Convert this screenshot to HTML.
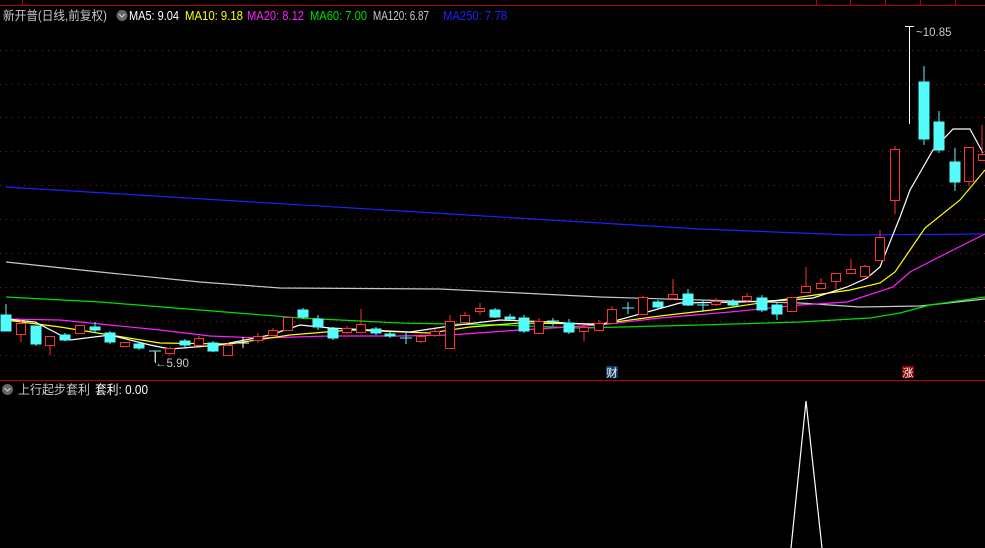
<!DOCTYPE html>
<html><head><meta charset="utf-8"><style>
html,body{margin:0;padding:0;background:#000;width:985px;height:548px;overflow:hidden}
svg{display:block}
text{font-family:"Liberation Sans","Noto Sans CJK SC",sans-serif}
</style></head><body>
<svg width="985" height="548" viewBox="0 0 985 548" xmlns="http://www.w3.org/2000/svg">
<rect width="985" height="548" fill="#000"/>
<line x1="0" y1="5.5" x2="985" y2="5.5" stroke="#b00000"/>
<line x1="22.5" y1="0" x2="22.5" y2="5" stroke="#b00000"/>
<g stroke="#b00000"><line x1="816.5" y1="0" x2="816.5" y2="5"/><line x1="850.5" y1="0" x2="850.5" y2="5"/><line x1="885.5" y1="0" x2="885.5" y2="5"/><line x1="920.5" y1="0" x2="920.5" y2="5"/><line x1="955.5" y1="0" x2="955.5" y2="5"/></g>
<g stroke="#8a1a1a" stroke-dasharray="1,5">
<line x1="0" y1="50.5" x2="985" y2="50.5"/><line x1="0" y1="84.5" x2="985" y2="84.5"/><line x1="0" y1="117.5" x2="985" y2="117.5"/><line x1="0" y1="151.5" x2="985" y2="151.5"/><line x1="0" y1="185.5" x2="985" y2="185.5"/><line x1="0" y1="219.5" x2="985" y2="219.5"/><line x1="0" y1="253.5" x2="985" y2="253.5"/><line x1="0" y1="287.5" x2="985" y2="287.5"/><line x1="0" y1="321.5" x2="985" y2="321.5"/><line x1="0" y1="355.5" x2="985" y2="355.5"/>
</g>
<line x1="0" y1="380.5" x2="985" y2="380.5" stroke="#c00000"/>
<g fill="none" stroke-width="1.2">
<polyline stroke="#2020ff" points="6,187 500,217 700,229 850,235 985,234"/>
<polyline stroke="#c8c8c8" points="6,262 100,272 200,282 280,288 440,289 600,297 700,300 800,303 860,307 920,306 985,299"/>
<polyline stroke="#00e000" points="6,297 100,302 200,310 300,318 400,323 500,325 580,328 700,325 800,322 870,318 900,313 930,305 985,297"/>
<polyline stroke="#ff20ff" points="6,319 60,320 110,325 160,330 210,336 260,338 330,336 400,336 450,335 520,330 600,325 660,318 730,312 800,305 847,302 893,287 910,272 947,253 985,234"/>
<polyline stroke="#ffff00" points="6,320 60,327 110,335 160,343 230,344 290,335 350,330 430,333 470,327 520,323 600,324 660,316 720,309 780,300 850,290 880,283 895,272 910,250 925,228 960,200 985,170"/>
<polyline stroke="#ffffff" points="6,319 35,322 70,340 110,335 150,345 170,349 220,345 270,335 300,325 330,328 370,330 410,332 450,326 500,320 550,322 600,325 640,314 680,303 740,302 790,300 813,298 847,287 867,278 880,267 900,217 910,190 933,150 953,129 970,129 983,153"/>
</g>
<g fill="#54fcfc" stroke="#54fcfc">
<line x1="6" y1="304" x2="6" y2="331"/><rect x="1" y="315" width="10" height="16"/>
<line x1="36" y1="326" x2="36" y2="346"/><rect x="31" y="326" width="10" height="18"/>
<line x1="65" y1="333" x2="65" y2="341"/><rect x="60" y="335" width="10" height="5"/>
<line x1="95" y1="322" x2="95" y2="333"/><rect x="90" y="327" width="10" height="3"/>
<line x1="110" y1="331" x2="110" y2="344"/><rect x="105" y="333" width="10" height="9"/>
<line x1="139" y1="342" x2="139" y2="350"/><rect x="134" y="344" width="10" height="4"/>
<line x1="155" y1="351" x2="155" y2="362"/><line x1="149" y1="351" x2="161" y2="351"/>
<line x1="185" y1="339" x2="185" y2="347"/><rect x="180" y="341" width="10" height="4"/>
<line x1="213" y1="341" x2="213" y2="352"/><rect x="208" y="343" width="10" height="8"/>
<line x1="303" y1="308" x2="303" y2="319"/><rect x="298" y="310" width="10" height="7"/>
<line x1="318" y1="315" x2="318" y2="330"/><rect x="313" y="319" width="10" height="8"/>
<line x1="333" y1="327" x2="333" y2="340"/><rect x="328" y="329" width="10" height="9"/>
<line x1="376" y1="327" x2="376" y2="335"/><rect x="371" y="329" width="10" height="4"/>
<line x1="390" y1="332" x2="390" y2="338"/><rect x="385" y="334" width="10" height="2"/>
<line x1="406" y1="333" x2="406" y2="344"/><line x1="400" y1="338" x2="412" y2="338"/>
<line x1="495" y1="308" x2="495" y2="318"/><rect x="490" y="310" width="10" height="7"/>
<line x1="510" y1="314" x2="510" y2="321"/><rect x="505" y="317" width="10" height="2"/>
<line x1="524" y1="315" x2="524" y2="333"/><rect x="519" y="318" width="10" height="13"/>
<line x1="553" y1="318" x2="553" y2="326"/><line x1="547" y1="321" x2="559" y2="321"/>
<line x1="569" y1="319" x2="569" y2="334"/><rect x="564" y="323" width="10" height="9"/>
<line x1="628" y1="302" x2="628" y2="314"/><line x1="622" y1="308" x2="634" y2="308"/>
<line x1="658" y1="300" x2="658" y2="309"/><rect x="653" y="302" width="10" height="5"/>
<line x1="688" y1="289" x2="688" y2="306"/><rect x="683" y="294" width="10" height="11"/>
<line x1="703" y1="300" x2="703" y2="312"/><line x1="697" y1="305" x2="709" y2="305"/>
<line x1="733" y1="299" x2="733" y2="307"/><rect x="728" y="302" width="10" height="3"/>
<line x1="762" y1="295" x2="762" y2="312"/><rect x="757" y="298" width="10" height="12"/>
<line x1="777" y1="303" x2="777" y2="320"/><rect x="772" y="305" width="10" height="9"/>
<line x1="924" y1="66" x2="924" y2="145"/><rect x="919" y="82" width="10" height="57"/>
<line x1="939" y1="111" x2="939" y2="153"/><rect x="934" y="122" width="10" height="28"/>
<line x1="955" y1="148" x2="955" y2="191"/><rect x="950" y="162" width="10" height="20"/>
</g>
<g fill="#000" stroke="#ff3232">
<line x1="21" y1="320" x2="21" y2="342"/><rect x="16.5" y="323.5" width="9" height="11"/>
<line x1="50" y1="336" x2="50" y2="355"/><rect x="45.5" y="336.5" width="9" height="9"/>
<rect x="75.5" y="325.5" width="9" height="8"/>
<line x1="125" y1="342" x2="125" y2="347"/><rect x="120.5" y="342.5" width="9" height="4"/>
<line x1="170" y1="347" x2="170" y2="355"/><rect x="165.5" y="348.5" width="9" height="5"/>
<line x1="199" y1="336" x2="199" y2="346"/><rect x="194.5" y="338.5" width="9" height="7"/>
<line x1="228" y1="343" x2="228" y2="355"/><rect x="223.5" y="345.5" width="9" height="10"/>
<line x1="243" y1="337" x2="243" y2="348" stroke="#fff"/><line x1="237" y1="343" x2="249" y2="343" stroke="#fff"/>
<line x1="258" y1="333" x2="258" y2="343"/><rect x="253.5" y="336.5" width="9" height="4"/>
<line x1="273" y1="328" x2="273" y2="336"/><rect x="268.5" y="330.5" width="9" height="5"/>
<rect x="283.5" y="317.5" width="9" height="13"/>
<line x1="347" y1="326" x2="347" y2="334"/><rect x="342.5" y="328.5" width="9" height="4"/>
<line x1="361" y1="309" x2="361" y2="333"/><rect x="356.5" y="324.5" width="9" height="8"/>
<line x1="421" y1="334" x2="421" y2="343"/><rect x="416.5" y="336.5" width="9" height="5"/>
<line x1="435" y1="329" x2="435" y2="337"/><rect x="430.5" y="331.5" width="9" height="4"/>
<line x1="450" y1="315" x2="450" y2="348"/><rect x="445.5" y="321.5" width="9" height="27"/>
<line x1="465" y1="312" x2="465" y2="322"/><rect x="460.5" y="315.5" width="9" height="7"/>
<line x1="480" y1="303" x2="480" y2="315"/><rect x="475.5" y="308.5" width="9" height="3"/>
<line x1="539" y1="318" x2="539" y2="334"/><rect x="534.5" y="321.5" width="9" height="12"/>
<line x1="584" y1="325" x2="584" y2="341"/><rect x="579.5" y="327.5" width="9" height="4"/>
<line x1="599" y1="320" x2="599" y2="331"/><rect x="594.5" y="323.5" width="9" height="7"/>
<line x1="612" y1="306" x2="612" y2="323"/><rect x="607.5" y="309.5" width="9" height="14"/>
<line x1="643" y1="296" x2="643" y2="314"/><rect x="638.5" y="297.5" width="9" height="17"/>
<line x1="673" y1="279" x2="673" y2="300"/><rect x="668.5" y="294.5" width="9" height="4"/>
<line x1="716" y1="298" x2="716" y2="306"/><rect x="711.5" y="301.5" width="9" height="3"/>
<line x1="747" y1="293" x2="747" y2="302"/><rect x="742.5" y="296.5" width="9" height="4"/>
<rect x="787.5" y="297.5" width="9" height="14"/>
<line x1="806" y1="267" x2="806" y2="292"/><rect x="801.5" y="286.5" width="9" height="6"/>
<line x1="821" y1="278" x2="821" y2="288"/><rect x="816.5" y="283.5" width="9" height="5"/>
<line x1="836" y1="273" x2="836" y2="289"/><rect x="831.5" y="273.5" width="9" height="8"/>
<line x1="851" y1="259" x2="851" y2="273"/><rect x="846.5" y="269.5" width="9" height="4"/>
<line x1="865" y1="265" x2="865" y2="277"/><rect x="860.5" y="266.5" width="9" height="10"/>
<line x1="880" y1="230" x2="880" y2="260"/><rect x="875.5" y="237.5" width="9" height="23"/>
<line x1="895" y1="146" x2="895" y2="214"/><rect x="890.5" y="149.5" width="9" height="51"/>
<line x1="969" y1="147" x2="969" y2="186"/><rect x="964.5" y="147.5" width="9" height="34"/>
<line x1="982" y1="125" x2="982" y2="160"/><rect x="978.5" y="154.5" width="9" height="6"/>
</g>
<g stroke="#fff" fill="none"><line x1="909.5" y1="26" x2="909.5" y2="124"/><line x1="905" y1="26.5" x2="914" y2="26.5"/></g>
<text x="916" y="36" font-size="11.5" fill="#c8c8c8">~10.85</text>
<text x="155" y="367" font-size="11.5" fill="#c8c8c8">←5.90</text>
<line x1="155.5" y1="352" x2="155.5" y2="363" stroke="#c8c8c8"/>
<rect x="606" y="366" width="12" height="12" fill="#103a6a"/>
<text x="606.5" y="376.5" font-size="11" fill="#fff">财</text>
<rect x="902" y="366" width="12" height="12" fill="#8a0000"/>
<text x="902.5" y="376.5" font-size="11" fill="#fff">涨</text>
<text x="3" y="20" font-size="12.5" fill="#c8c8c8" textLength="104" lengthAdjust="spacingAndGlyphs">新开普(日线,前复权)</text>
<circle cx="122" cy="15.5" r="5.5" fill="#666"/><path d="M119 14l3 3 3-3" stroke="#ccc" fill="none" stroke-width="1.2"/>
<g font-size="12.5">
<text x="129" y="20" fill="#ffffff" textLength="50" lengthAdjust="spacingAndGlyphs">MA5: 9.04</text>
<text x="185" y="20" fill="#ffff00" textLength="58" lengthAdjust="spacingAndGlyphs">MA10: 9.18</text>
<text x="247" y="20" fill="#ff20ff" textLength="57" lengthAdjust="spacingAndGlyphs">MA20: 8.12</text>
<text x="310" y="20" fill="#00e000" textLength="57" lengthAdjust="spacingAndGlyphs">MA60: 7.00</text>
<text x="373" y="20" fill="#c8c8c8" textLength="56" lengthAdjust="spacingAndGlyphs">MA120: 6.87</text>
<text x="443" y="20" fill="#2020ff" textLength="64" lengthAdjust="spacingAndGlyphs">MA250: 7.78</text>
</g>
<circle cx="7.5" cy="389.5" r="5.5" fill="#666"/><path d="M4.5 388l3 3 3-3" stroke="#ccc" fill="none" stroke-width="1.2"/>
<text x="18" y="394" font-size="12.5" fill="#c8c8c8" textLength="72" lengthAdjust="spacingAndGlyphs">上行起步套利</text>
<text x="95" y="394" font-size="12.5" fill="#fff" textLength="53" lengthAdjust="spacingAndGlyphs">套利: 0.00</text>
<polyline points="791,548 806,401 822,548" fill="none" stroke="#fff" stroke-width="1.2"/>
</svg>
</body></html>
